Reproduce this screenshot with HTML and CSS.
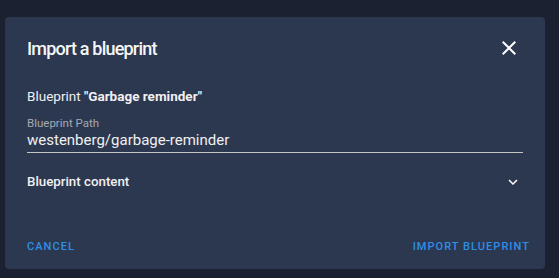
FILE: index.html
```html
<!DOCTYPE html>
<html>
<head>
<meta charset="utf-8">
<link rel="stylesheet" href="styles.css">
</head>
<body>
<div class="dialog">
  <div class="header">
    <h2 class="title">Import a blueprint</h2>
    <button class="close" aria-label="Close">
      <svg viewBox="0 0 24 24" width="24" height="24"><path fill="currentColor" d="M19 6.41L17.59 5 12 10.59 6.41 5 5 6.41 10.59 12 5 17.590 6.41 19 12 13.41 17.59 19 19 17.59 13.41 12z"/></svg>
    </button>
  </div>
  <div class="content">
    <div class="bp-name">Blueprint <b>"Garbage reminder"</b></div>
    <div class="field">
      <label class="field-label">Blueprint Path</label>
      <div class="field-value">westenberg/garbage-reminder</div>
    </div>
    <div class="expander">
      <span>Blueprint content</span>
      <svg viewBox="0 0 24 24" width="18" height="18"><path fill="currentColor" d="M16.59 8.59L12 13.17 7.41 8.59 6 10l6 6 6-6z"/></svg>
    </div>
  </div>
  <div class="actions">
    <button class="btn">Cancel</button>
    <button class="btn">Import blueprint</button>
  </div>
</div>
</body>
</html>
```
FILE: styles.css
```css
html, body {
  margin: 0;
  padding: 0;
}
body {
  background: #1c2131;
  width: 559px;
  height: 278px;
  overflow: hidden;
  font-family: Roboto, "Noto Sans", sans-serif;
  color: #e1e1e1;
}
.dialog {
  box-sizing: border-box;
  margin: 17px 0 0 5px;
  width: 540px;
  height: 252px;
  background: #2c3750;
  border-radius: 4px;
  display: flex;
  flex-direction: column;
  padding: 0 14px 0 22px;
}
.header {
  display: flex;
  align-items: center;
  justify-content: space-between;
  height: 62px;
}
.title {
  margin: 0;
  font-size: 18px;
  font-weight: 500;
  letter-spacing: -0.8px;
  color: #f6f6f6;
  white-space: nowrap;
}
.close {
  background: none;
  border: 0;
  padding: 0;
  width: 24px;
  height: 24px;
  margin-right: 10px;
  color: #ffffff;
  display: flex;
}
.content {
  display: flex;
  flex-direction: column;
  padding-right: 8px;
}
.bp-name {
  margin-top: 8px;
  font-size: 13.5px;
  font-weight: 400;
  color: #f0f0f0;
  line-height: 18px;
}
.bp-name b {
  font-weight: 700;
}
.field {
  margin-top: 12px;
  border-bottom: 1px solid #c4c4c4;
  display: flex;
  flex-direction: column;
}
.field-label {
  font-size: 11.5px;
  color: #a5a9b1;
  line-height: 13px;
}
.field-value {
  font-size: 15px;
  line-height: 20px;
  color: #f0f0f0;
  padding-bottom: 2px;
}
.expander {
  display: flex;
  align-items: center;
  justify-content: space-between;
  margin-top: 20px;
  font-size: 13.3px;
  font-weight: 500;
  color: #f0f0f0;
  line-height: 18px;
}
.expander svg {
  color: #ffffff;
  margin-right: 1px;
}
.actions {
  margin-top: auto;
  margin-bottom: 15px;
  display: flex;
  justify-content: space-between;
  padding-right: 1px;
}
.btn {
  background: none;
  border: 0;
  padding: 0;
  font-family: Roboto, sans-serif;
  font-size: 11px;
  font-weight: 500;
  letter-spacing: 1.05px;
  text-transform: uppercase;
  color: #2f8fe6;
  line-height: 14px;
}
```
